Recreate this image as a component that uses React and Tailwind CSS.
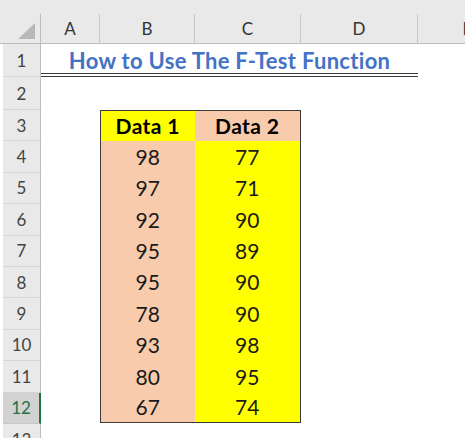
const rowH = 31.4;

const data = [
  [98, 77],
  [97, 71],
  [92, 90],
  [95, 89],
  [95, 90],
  [78, 90],
  [93, 98],
  [80, 95],
  [67, 74],
];

function RowHead({ n, h, active }) {
  return (
    <div
      className={
        active
          ? "flex items-center justify-center bg-[#d2d2d2] text-[#217346] border-b border-[#c8c8c8] border-r-2 border-r-[#217346]"
          : "flex items-center justify-center bg-[#e9e9e9] text-[#444] border-b border-[#d4d4d4] border-r border-r-[#bdbdbd]"
      }
      style={{ height: h }}
    >
      <span className="text-[17px] leading-none">{n}</span>
    </div>
  );
}

export default function App() {
  return (
    <div className="w-[468px] h-[438px] overflow-hidden bg-white font-['Lato','Liberation_Sans',sans-serif]">
      <div className="w-[465px] h-full overflow-hidden">
        {/* column headers */}
        <div className="flex h-[44px] bg-[#e9e9e9] border-b border-[#bdbdbd] pt-[14px]">
          <div className="w-[41px] shrink-0 flex items-end justify-end pr-[5px] pb-[4px] border-r border-[#bdbdbd]">
            <svg width="17" height="16" viewBox="0 0 17 16">
              <polygon points="17,0 17,16 0,16" fill="#b8b8b8" />
            </svg>
          </div>
          {[
            ["A", 59],
            ["B", 95],
            ["C", 106],
            ["D", 117],
            ["E", 100],
          ].map(([l, w]) => (
            <div
              key={l}
              className="shrink-0 flex items-center justify-center border-r border-[#c8c8c8] text-[17px] text-[#333]"
              style={{ width: w }}
            >
              {l}
            </div>
          ))}
        </div>

        <div className="flex">
          {/* row headers */}
          <div className="w-[41px] shrink-0 pl-[3px]">
            <RowHead n={1} h={33} />
            <RowHead n={2} h={33} />
            {[3, 4, 5, 6, 7, 8, 9, 10, 11].map((n) => (
              <RowHead key={n} n={n} h={rowH} />
            ))}
            <RowHead n={12} h={rowH} active />
            <RowHead n={13} h={rowH} />
          </div>

          {/* sheet */}
          <div className="flex-1">
            <div className="w-[377px] h-[33px] flex items-center justify-center pt-[4px] border-b-4 border-double border-[#3a3a3a]">
              <span className="text-[22px] font-bold tracking-[0.3px] text-[#4472c4] leading-none">
                How to Use The F-Test Function
              </span>
            </div>
            <div className="h-[33px]" />
            <div className="flex">
              <div className="w-[59px] shrink-0" />
              <div className="w-[201px] shrink-0 border-[1.5px] border-[#3a3a3a] text-[21px] text-[#1a1a1a]">
                <div className="flex" style={{ height: rowH - 1.5 }}>
                  <div className="w-[93.5px] bg-[#ffff00] flex items-center justify-center font-bold text-black tracking-[0.4px]">
                    Data 1
                  </div>
                  <div className="flex-1 bg-[#f8cbad] flex items-center justify-center font-bold text-black tracking-[0.4px]">
                    Data 2
                  </div>
                </div>
                {data.map(([a, b], i) => (
                  <div
                    key={i}
                    className="flex"
                    style={{ height: i === data.length - 1 ? rowH - 1.5 : rowH }}
                  >
                    <div className="w-[93.5px] bg-[#f8cbad] flex items-center justify-center">{a}</div>
                    <div className="flex-1 bg-[#ffff00] flex items-center justify-center">{b}</div>
                  </div>
                ))}
              </div>
            </div>
          </div>
        </div>
      </div>
    </div>
  );
}
